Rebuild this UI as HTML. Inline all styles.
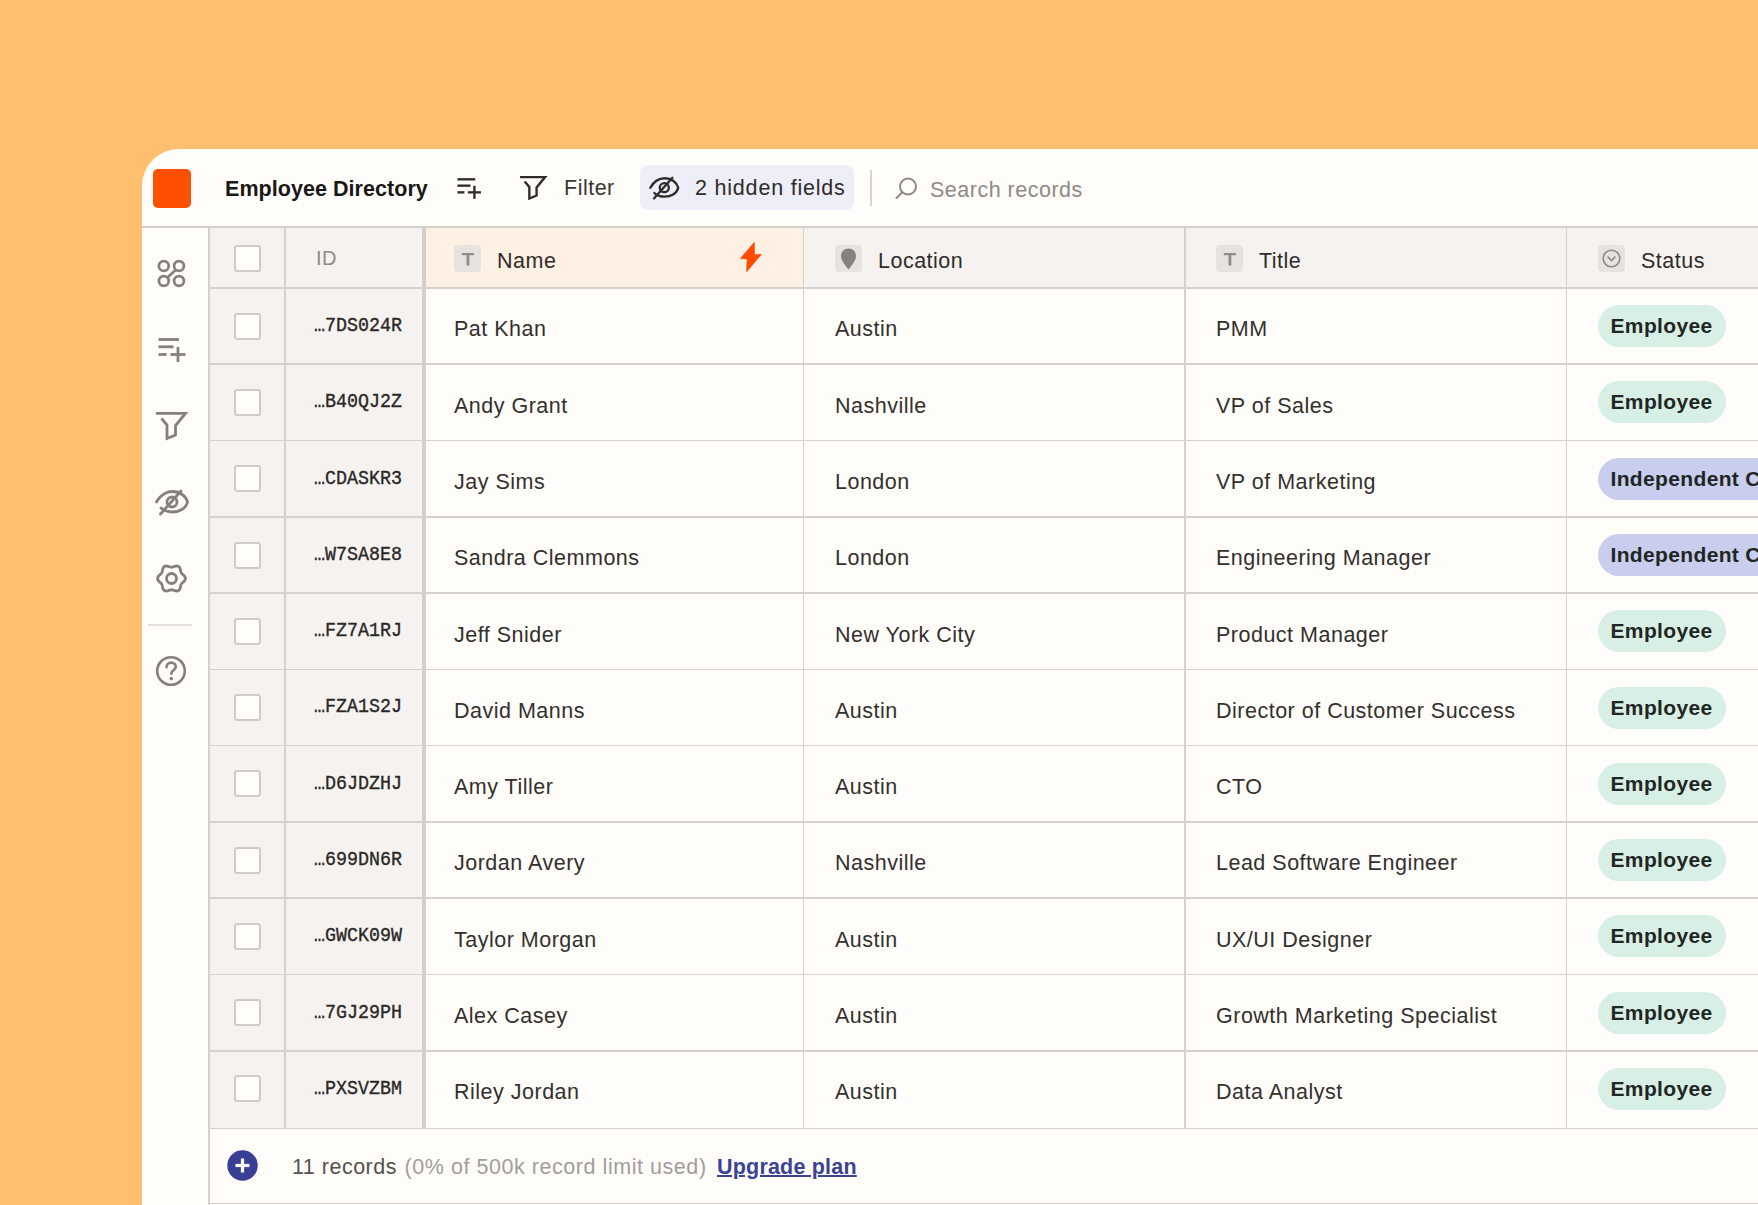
<!DOCTYPE html>
<html><head><meta charset="utf-8"><style>
*{margin:0;padding:0;box-sizing:border-box}
html,body{width:1758px;height:1205px;overflow:hidden;background:#FFBF6F;font-family:"Liberation Sans",sans-serif;color:#33302D}
.a{position:absolute}
.card{left:142px;top:149px;width:1700px;height:1200px;background:#FFFDF9;border-top-left-radius:37px}
.hl{height:1.6px;background:#D5D2CD}
.vl{width:1.6px;background:#D5D2CD}
.txt{font-size:21.5px;letter-spacing:0.5px;white-space:nowrap;line-height:1}
.mono{font-family:"Liberation Mono",monospace;font-size:20px;transform:scaleX(0.917);transform-origin:0 0;-webkit-text-stroke:0.35px #2A2826;white-space:nowrap;line-height:1;color:#2A2826}
.cb{width:27px;height:27px;border:2.6px solid #CFCCC7;border-radius:3px;background:#FFFDF9}
.pill{height:42px;border-radius:21px;font-weight:bold;font-size:21px;letter-spacing:0.35px;line-height:42px;padding:0 13px;white-space:nowrap;color:#1F2624}
.emp{background:#D8EFE6}
.ind{background:#C9CEEE}
.tbox{width:27px;height:27px;border-radius:4px;background:#E6E3DE}
svg{position:absolute;overflow:visible}
</style></head>
<body>
<div class="a card"></div>
<div class="a" style="left:153px;top:169px;width:37.5px;height:38.5px;background:#FF4F00;border-radius:5px"></div>
<div class="a txt" style="left:225px;top:178.5px;font-weight:bold;font-size:21.5px;letter-spacing:0.05px;color:#1A1816">Employee Directory</div>
<svg class="a" style="left:456.5px;top:177.5px" width="24.36" height="21.75" viewBox="0 0 28 25">
<g stroke="#2F2C29" stroke-width="2.7" fill="none" stroke-linecap="butt">
<line x1="0.5" y1="1.5" x2="21" y2="1.5"/><line x1="0.5" y1="8.8" x2="15.5" y2="8.8"/><line x1="0.5" y1="16.5" x2="8.5" y2="16.5"/>
<line x1="12.5" y1="16.5" x2="27.5" y2="16.5"/><line x1="20" y1="9" x2="20" y2="24"/></g></svg>
<svg class="a" style="left:520px;top:176px" width="25.5" height="22.95" viewBox="0 0 30 27">
<path d="M0 1.3 H29.5 L19.5 13.5 V23 L11 26.5 V13 L5.5 6.5" stroke="#2F2C29" stroke-width="2.8" fill="none" stroke-linejoin="miter"/></svg>
<div class="a txt" style="left:564px;top:178px;color:#3A3734">Filter</div>
<div class="a" style="left:640px;top:165px;width:214px;height:45px;background:#EEEEF9;border-radius:8px"></div>
<svg class="a" style="left:649px;top:176px" width="30.6" height="24.3" viewBox="0 0 34 27">
<g stroke="#2F2C29" stroke-width="2.6" fill="none" stroke-linecap="round">
<path d="M1.5 13 C6 5 13 2.5 17.5 2.5 C25 2.5 31 7 32.5 13 C31 19.5 24 23 17.5 23 C13 23 9 21.5 6 19"/>
<circle cx="17" cy="13" r="5"/>
<line x1="26" y1="2" x2="5.5" y2="25"/></g></svg>
<div class="a txt" style="left:695px;top:178px;letter-spacing:0.8px;color:#2F2C29">2 hidden fields</div>
<div class="a" style="left:870px;top:170px;width:1.6px;height:36px;background:#D8D5D1"></div>
<svg class="a" style="left:895px;top:177px" width="23" height="22" viewBox="0 0 23 22">
<g stroke="#8C8985" stroke-width="2.0" fill="none" stroke-linecap="round"><circle cx="13" cy="9.5" r="8"/><line x1="7.3" y1="15.2" x2="1.5" y2="21"/></g></svg>
<div class="a txt" style="left:930px;top:180px;color:#8E8A86">Search records</div>
<div class="a" style="left:142px;top:226px;width:1616px;height:2px;background:#D5D2CD"></div>
<svg class="a" style="left:156px;top:258px" width="31" height="31" viewBox="0 0 31 31">
<g stroke="#84817D" stroke-width="2.7" fill="none"><circle cx="7.8" cy="8" r="4.9"/><circle cx="23" cy="8" r="4.9"/><circle cx="7.8" cy="23" r="4.9"/><circle cx="23" cy="23" r="4.9"/><line x1="19.8" y1="11.8" x2="11.5" y2="19.5"/></g></svg>
<svg class="a" style="left:158px;top:338px" width="28.0" height="25.0" viewBox="0 0 28 25">
<g stroke="#84817D" stroke-width="2.8" fill="none" stroke-linecap="butt">
<line x1="0.5" y1="1.5" x2="21" y2="1.5"/><line x1="0.5" y1="8.8" x2="15.5" y2="8.8"/><line x1="0.5" y1="16.5" x2="8.5" y2="16.5"/>
<line x1="12.5" y1="16.5" x2="27.5" y2="16.5"/><line x1="20" y1="9" x2="20" y2="24"/></g></svg>
<svg class="a" style="left:156px;top:412px" width="30.0" height="27.0" viewBox="0 0 30 27">
<path d="M0 1.3 H29.5 L19.5 13.5 V23 L11 26.5 V13 L5.5 6.5" stroke="#84817D" stroke-width="2.8" fill="none" stroke-linejoin="miter"/></svg>
<svg class="a" style="left:155px;top:489px" width="34.0" height="27.0" viewBox="0 0 34 27">
<g stroke="#84817D" stroke-width="2.8" fill="none" stroke-linecap="round">
<path d="M1.5 13 C6 5 13 2.5 17.5 2.5 C25 2.5 31 7 32.5 13 C31 19.5 24 23 17.5 23 C13 23 9 21.5 6 19"/>
<circle cx="17" cy="13" r="5"/>
<line x1="26" y1="2" x2="5.5" y2="25"/></g></svg>
<svg class="a" style="left:155px;top:562px" width="33" height="33" viewBox="0 0 33 33">
<g stroke="#84817D" stroke-width="2.8" fill="none"><path d="M30.50 16.50 L29.97 18.27 L28.67 19.76 L27.23 20.94 L26.20 22.10 L25.71 23.57 L25.41 25.41 L24.77 27.28 L23.50 28.62 L21.70 29.06 L19.76 28.67 L18.02 28.01 L16.50 27.70 L14.98 28.01 L13.24 28.67 L11.30 29.06 L9.50 28.62 L8.23 27.28 L7.59 25.41 L7.29 23.57 L6.80 22.10 L5.77 20.94 L4.33 19.76 L3.03 18.27 L2.50 16.50 L3.03 14.73 L4.33 13.24 L5.77 12.06 L6.80 10.90 L7.29 9.43 L7.59 7.59 L8.23 5.72 L9.50 4.38 L11.30 3.94 L13.24 4.33 L14.98 4.99 L16.50 5.30 L18.02 4.99 L19.76 4.33 L21.70 3.94 L23.50 4.38 L24.77 5.72 L25.41 7.59 L25.71 9.43 L26.20 10.90 L27.23 12.06 L28.67 13.24 L29.97 14.73 L30.50 16.50Z"/><circle cx="16.5" cy="16.5" r="5"/></g></svg>
<div class="a" style="left:148px;top:624px;width:44px;height:1.6px;background:#E4E0DB"></div>
<svg class="a" style="left:155px;top:655px" width="33" height="33" viewBox="0 0 33 33">
<g stroke="#84817D" stroke-width="2.6" fill="none" stroke-linecap="round"><circle cx="16" cy="16" r="13.8"/>
<path d="M11.5 12.3 C11.5 9.3 13.6 7.6 16.2 7.6 C18.9 7.6 20.8 9.4 20.8 11.8 C20.8 14.8 16.3 15.3 16.3 18.8"/></g>
<circle cx="16.3" cy="23.6" r="1.8" fill="#84817D"/></svg>
<div class="a" style="left:208px;top:228px;width:1.6px;height:977px;background:#D5D2CD"></div>
<div class="a" style="left:209.6px;top:228px;width:212.4px;height:900.3px;background:#F5F2EF"></div>
<div class="a" style="left:426px;top:228px;width:1332px;height:60px;background:#F5F2EF"></div>
<div class="a" style="left:426px;top:228px;width:377px;height:60px;background:#FFF0E4"></div>
<div class="a hl" style="left:209px;top:287.20px;width:1549px"></div>
<div class="a hl" style="left:209px;top:363.48px;width:1549px"></div>
<div class="a hl" style="left:209px;top:439.76px;width:1549px"></div>
<div class="a hl" style="left:209px;top:516.04px;width:1549px"></div>
<div class="a hl" style="left:209px;top:592.32px;width:1549px"></div>
<div class="a hl" style="left:209px;top:668.60px;width:1549px"></div>
<div class="a hl" style="left:209px;top:744.88px;width:1549px"></div>
<div class="a hl" style="left:209px;top:821.16px;width:1549px"></div>
<div class="a hl" style="left:209px;top:897.44px;width:1549px"></div>
<div class="a hl" style="left:209px;top:973.72px;width:1549px"></div>
<div class="a hl" style="left:209px;top:1050.00px;width:1549px"></div>
<div class="a hl" style="left:209px;top:1127.50px;width:1549px"></div>
<div class="a hl" style="left:209px;top:1202.6px;width:1549px"></div>
<div class="a vl" style="left:284.2px;top:228px;height:900.3px"></div>
<div class="a vl" style="left:802.7px;top:228px;height:900.3px"></div>
<div class="a vl" style="left:1184.2px;top:228px;height:900.3px"></div>
<div class="a vl" style="left:1565.7px;top:228px;height:900.3px"></div>
<div class="a" style="left:421.8px;top:228px;width:4.2px;height:900.3px;background:#D2D0CC"></div>
<div class="a cb" style="left:234px;top:245px"></div>
<div class="a txt" style="left:316px;top:247.5px;color:#8F8B86;font-size:20px">ID</div>
<div class="a tbox" style="left:454px;top:244.6px"><svg style="left:0;top:0" width="27" height="27" viewBox="0 0 27 27"><g fill="#8F8B87"><rect x="7.8" y="8" width="12.2" height="2.2"/><rect x="12.5" y="8" width="2.8" height="12.6"/></g></svg></div>
<div class="a txt" style="left:497px;top:250.5px;color:#2F2C29">Name</div>
<svg class="a" style="left:739px;top:242px" width="24" height="31" viewBox="0 0 24 31">
<path d="M15.3 0.3 L15.6 12.6 L22.3 12.4 L7.6 29.8 L8.1 16.9 L1.3 16.6 Z" fill="#FF4A00" stroke="#FF4A00" stroke-width="0.6" stroke-linejoin="round"/></svg>
<div class="a tbox" style="left:835px;top:244.6px"><svg style="left:5px;top:3px" width="17" height="22" viewBox="0 0 17 22"><path d="M8.5 0.5 C13 0.5 16 3.8 16 8 C16 12.5 12 17 8.5 21.5 C5 17 1 12.5 1 8 C1 3.8 4 0.5 8.5 0.5Z" fill="#86837E"/></svg></div>
<div class="a txt" style="left:878px;top:250.5px;color:#2F2C29">Location</div>
<div class="a tbox" style="left:1216px;top:244.6px"><svg style="left:0;top:0" width="27" height="27" viewBox="0 0 27 27"><g fill="#8F8B87"><rect x="7.8" y="8" width="12.2" height="2.2"/><rect x="12.5" y="8" width="2.8" height="12.6"/></g></svg></div>
<div class="a txt" style="left:1259px;top:250.5px;color:#2F2C29">Title</div>
<div class="a tbox" style="left:1597.5px;top:244.6px"><svg style="left:4px;top:4px" width="19" height="19" viewBox="0 0 19 19"><g stroke="#8F8C88" stroke-width="1.6" fill="none"><circle cx="9.5" cy="9.5" r="8.3"/><path d="M5.6 7.6 L9.5 11.6 L13.4 7.6"/></g></svg></div>
<div class="a txt" style="left:1641px;top:250.5px;color:#2F2C29">Status</div>
<div class="a cb" style="left:234px;top:312.6px"></div>
<div class="a mono" style="left:314px;top:315.9px">…7DS024R</div>
<div class="a txt" style="left:454px;top:319.3px">Pat Khan</div>
<div class="a txt" style="left:835px;top:319.3px">Austin</div>
<div class="a txt" style="left:1216px;top:319.3px">PMM</div>
<div class="a pill emp" style="left:1597.5px;top:305.1px">Employee</div>
<div class="a cb" style="left:234px;top:388.9px"></div>
<div class="a mono" style="left:314px;top:392.2px">…B40QJ2Z</div>
<div class="a txt" style="left:454px;top:395.6px">Andy Grant</div>
<div class="a txt" style="left:835px;top:395.6px">Nashville</div>
<div class="a txt" style="left:1216px;top:395.6px">VP of Sales</div>
<div class="a pill emp" style="left:1597.5px;top:381.4px">Employee</div>
<div class="a cb" style="left:234px;top:465.2px"></div>
<div class="a mono" style="left:314px;top:468.5px">…CDASKR3</div>
<div class="a txt" style="left:454px;top:471.9px">Jay Sims</div>
<div class="a txt" style="left:835px;top:471.9px">London</div>
<div class="a txt" style="left:1216px;top:471.9px">VP of Marketing</div>
<div class="a pill ind" style="left:1597.5px;top:457.7px">Independent Contractor</div>
<div class="a cb" style="left:234px;top:541.5px"></div>
<div class="a mono" style="left:314px;top:544.8px">…W7SA8E8</div>
<div class="a txt" style="left:454px;top:548.2px">Sandra Clemmons</div>
<div class="a txt" style="left:835px;top:548.2px">London</div>
<div class="a txt" style="left:1216px;top:548.2px">Engineering Manager</div>
<div class="a pill ind" style="left:1597.5px;top:534.0px">Independent Contractor</div>
<div class="a cb" style="left:234px;top:617.8px"></div>
<div class="a mono" style="left:314px;top:621.1px">…FZ7A1RJ</div>
<div class="a txt" style="left:454px;top:624.5px">Jeff Snider</div>
<div class="a txt" style="left:835px;top:624.5px">New York City</div>
<div class="a txt" style="left:1216px;top:624.5px">Product Manager</div>
<div class="a pill emp" style="left:1597.5px;top:610.3px">Employee</div>
<div class="a cb" style="left:234px;top:694.0px"></div>
<div class="a mono" style="left:314px;top:697.3px">…FZA1S2J</div>
<div class="a txt" style="left:454px;top:700.7px">David Manns</div>
<div class="a txt" style="left:835px;top:700.7px">Austin</div>
<div class="a txt" style="left:1216px;top:700.7px">Director of Customer Success</div>
<div class="a pill emp" style="left:1597.5px;top:686.5px">Employee</div>
<div class="a cb" style="left:234px;top:770.3px"></div>
<div class="a mono" style="left:314px;top:773.6px">…D6JDZHJ</div>
<div class="a txt" style="left:454px;top:777.0px">Amy Tiller</div>
<div class="a txt" style="left:835px;top:777.0px">Austin</div>
<div class="a txt" style="left:1216px;top:777.0px">CTO</div>
<div class="a pill emp" style="left:1597.5px;top:762.8px">Employee</div>
<div class="a cb" style="left:234px;top:846.6px"></div>
<div class="a mono" style="left:314px;top:849.9px">…699DN6R</div>
<div class="a txt" style="left:454px;top:853.3px">Jordan Avery</div>
<div class="a txt" style="left:835px;top:853.3px">Nashville</div>
<div class="a txt" style="left:1216px;top:853.3px">Lead Software Engineer</div>
<div class="a pill emp" style="left:1597.5px;top:839.1px">Employee</div>
<div class="a cb" style="left:234px;top:922.9px"></div>
<div class="a mono" style="left:314px;top:926.2px">…GWCK09W</div>
<div class="a txt" style="left:454px;top:929.6px">Taylor Morgan</div>
<div class="a txt" style="left:835px;top:929.6px">Austin</div>
<div class="a txt" style="left:1216px;top:929.6px">UX/UI Designer</div>
<div class="a pill emp" style="left:1597.5px;top:915.4px">Employee</div>
<div class="a cb" style="left:234px;top:999.2px"></div>
<div class="a mono" style="left:314px;top:1002.5px">…7GJ29PH</div>
<div class="a txt" style="left:454px;top:1005.9px">Alex Casey</div>
<div class="a txt" style="left:835px;top:1005.9px">Austin</div>
<div class="a txt" style="left:1216px;top:1005.9px">Growth Marketing Specialist</div>
<div class="a pill emp" style="left:1597.5px;top:991.7px">Employee</div>
<div class="a cb" style="left:234px;top:1075.4px"></div>
<div class="a mono" style="left:314px;top:1078.7px">…PXSVZBM</div>
<div class="a txt" style="left:454px;top:1082.1px">Riley Jordan</div>
<div class="a txt" style="left:835px;top:1082.1px">Austin</div>
<div class="a txt" style="left:1216px;top:1082.1px">Data Analyst</div>
<div class="a pill emp" style="left:1597.5px;top:1067.9px">Employee</div>
<svg class="a" style="left:227px;top:1150px" width="31" height="31" viewBox="0 0 31 31">
<circle cx="15.5" cy="15.5" r="15.2" fill="#3A3F96"/><g stroke="#fff" stroke-width="3.2"><line x1="8.5" y1="15.5" x2="22.5" y2="15.5"/><line x1="15.5" y1="8.5" x2="15.5" y2="22.5"/></g></svg>
<div class="a txt" style="left:292px;top:1157px;color:#55524E">11 records</div>
<div class="a txt" style="left:404.5px;top:1157px;letter-spacing:0.55px;color:#A19E99">(0% of 500k record limit used)</div>
<div class="a txt" style="left:717px;top:1157px;color:#3B4396;font-weight:bold;letter-spacing:0.2px;text-decoration:underline;text-decoration-thickness:1.5px;text-underline-offset:1px">Upgrade plan</div>
</body></html>
